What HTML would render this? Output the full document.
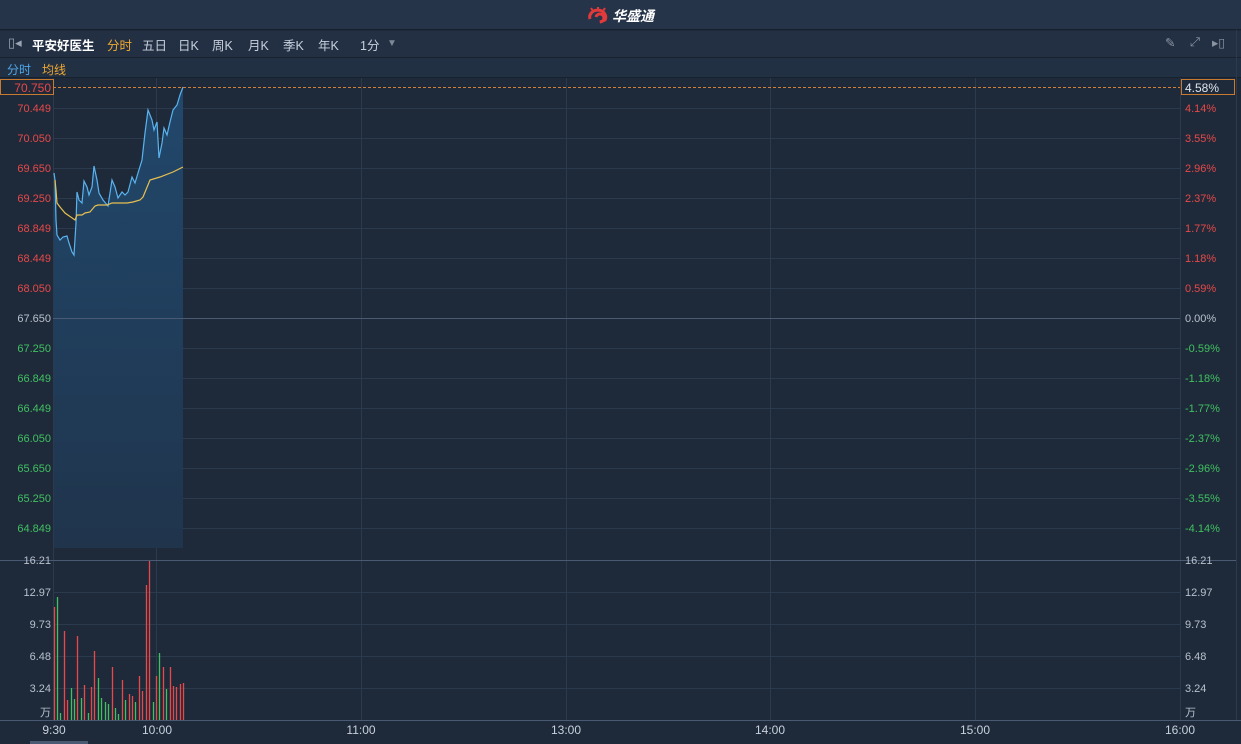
<!DOCTYPE html>
<html><head><meta charset="utf-8"><style>
*{margin:0;padding:0;box-sizing:border-box}
body{width:1241px;height:744px;background:#1e2a3a;font-family:"Liberation Sans","Noto Sans CJK SC",sans-serif;overflow:hidden;position:relative;color:#c8d0dc}
.top{position:absolute;left:0;top:0;width:1241px;height:30px;background:#26344a;border-bottom:1px solid #18212e}
.tb{position:absolute;left:0;top:31px;width:1241px;height:27px;background:#233044;border-bottom:1px solid #18212e;font-size:12.5px}
.tb span{position:absolute;top:4px}
.lg{position:absolute;left:0;top:58px;width:1241px;height:20px;background:#223044;border-bottom:1px solid #18212e;font-size:12px}
svg.c{position:absolute;left:0;top:0}
</style></head><body>
<div class="top"></div>
<div style="position:absolute;left:588px;top:6px;height:20px;display:flex;align-items:center;font-size:14px;font-weight:bold;color:#fff;">
<svg width="22" height="18" viewBox="0 0 22 18"><path d="M2 12 A8 7 0 1 1 17 13 L12 15 A4 4 0 1 0 8 10" fill="none" stroke="#e23a3a" stroke-width="3"/><path d="M5 4 L3 1 M10 2 L10 0 M15 4 L17 1" stroke="#e23a3a" stroke-width="2"/></svg><span style="margin-left:2px;font-style:italic">华盛通</span></div>
<div class="tb">
<span style="left:8px;top:4px;color:#9aa4b2;font-size:13px">▯◂</span>
<span style="left:32px;color:#fff;font-weight:bold">平安好医生</span>
<span style="left:107px;color:#f0a830">分时</span>
<span style="left:142px">五日</span>
<span style="left:178px">日K</span>
<span style="left:212px">周K</span>
<span style="left:248px">月K</span>
<span style="left:283px">季K</span>
<span style="left:318px">年K</span>
<span style="left:360px">1分</span>
<span style="left:387px;color:#7d8898;font-size:10px;top:7px">▼</span>
<span style="left:1165px;color:#8a94a2;top:4px">✎</span>
<span style="left:1190px;color:#8a94a2;top:4px">⤢</span>
<span style="left:1212px;color:#8a94a2;top:4px">▸▯</span>
</div>
<div class="lg"><span style="position:absolute;left:7px;top:3px;color:#4ea8e8">分时</span><span style="position:absolute;left:42px;top:3px;color:#f0a830">均线</span></div>
<svg class="c" width="1241" height="744" font-size="11" font-family="Liberation Sans, sans-serif">
<defs><linearGradient id="g" x1="0" y1="0" x2="0" y2="1"><stop offset="0" stop-color="#21486c"/><stop offset="1" stop-color="#20344c"/></linearGradient></defs>
<g stroke="#2c3a4e" stroke-width="1">
<line x1="53" y1="108.5" x2="1180" y2="108.5"/><line x1="53" y1="138.5" x2="1180" y2="138.5"/><line x1="53" y1="168.5" x2="1180" y2="168.5"/><line x1="53" y1="198.5" x2="1180" y2="198.5"/><line x1="53" y1="228.5" x2="1180" y2="228.5"/><line x1="53" y1="258.5" x2="1180" y2="258.5"/><line x1="53" y1="288.5" x2="1180" y2="288.5"/><line x1="53" y1="348.5" x2="1180" y2="348.5"/><line x1="53" y1="378.5" x2="1180" y2="378.5"/><line x1="53" y1="408.5" x2="1180" y2="408.5"/><line x1="53" y1="438.5" x2="1180" y2="438.5"/><line x1="53" y1="468.5" x2="1180" y2="468.5"/><line x1="53" y1="498.5" x2="1180" y2="498.5"/><line x1="53" y1="528.5" x2="1180" y2="528.5"/>
<line x1="53" y1="592.5" x2="1180" y2="592.5"/><line x1="53" y1="624.5" x2="1180" y2="624.5"/><line x1="53" y1="656.5" x2="1180" y2="656.5"/><line x1="53" y1="688.5" x2="1180" y2="688.5"/>
<line x1="53.5" y1="78" x2="53.5" y2="720"/><line x1="156.5" y1="78" x2="156.5" y2="720"/><line x1="361.5" y1="78" x2="361.5" y2="720"/><line x1="566.5" y1="78" x2="566.5" y2="720"/><line x1="770.5" y1="78" x2="770.5" y2="720"/><line x1="975.5" y1="78" x2="975.5" y2="720"/><line x1="1180.5" y1="78" x2="1180.5" y2="720"/><line x1="1236.5" y1="30" x2="1236.5" y2="720"/>
</g>
<polygon fill="url(#g)" points="54,173 55,180 56,220 57,235 60,240 63,237 67,236 69,243 72,252 74,255 76,223 77,192 79,200 82,203 84,181 87,187 89,195 92,187 94,166 97,180 99,193 103,200 108,206 112,180 115,187 118,198 122,192 125,195 128,192 132,177 135,183 138,173 142,160 145,133 148,110 152,120 154,130 157,122 159,158 162,143 164,128 167,135 170,122 173,110 177,105 180,95 183,87 183,548 54,548"/>
<line x1="53" y1="318.5" x2="1180" y2="318.5" stroke="#4a5a72"/>
<line x1="0" y1="560.5" x2="1236" y2="560.5" stroke="#4a5a72"/>
<line x1="0" y1="720.5" x2="1241" y2="720.5" stroke="#4a5a72"/>
<polyline fill="none" stroke="#5ab4f0" stroke-width="1.2" points="54,173 55,180 56,220 57,235 60,240 63,237 67,236 69,243 72,252 74,255 76,223 77,192 79,200 82,203 84,181 87,187 89,195 92,187 94,166 97,180 99,193 103,200 108,206 112,180 115,187 118,198 122,192 125,195 128,192 132,177 135,183 138,173 142,160 145,133 148,110 152,120 154,130 157,122 159,158 162,143 164,128 167,135 170,122 173,110 177,105 180,95 183,87"/>
<polyline fill="none" stroke="#e8c050" stroke-width="1.2" points="55,180 56,190 57,203 60,207 65,213 75,220 77,215 82,215 85,213 90,212 95,206 98,205 107,205 112,203 127,203 133,202 140,200 143,197 150,180 160,177 173,172 183,167"/>
<line x1="53" y1="87.5" x2="1180" y2="87.5" stroke="#d08038" stroke-dasharray="3,2"/>
<rect x="0.5" y="79.5" width="53" height="15" fill="#1e2a3a" stroke="#c87a30"/>
<rect x="1181.5" y="79.5" width="53" height="15" fill="#1e2a3a" stroke="#c87a30"/>
<g text-anchor="end" fill="#e84848">
<text x="51" y="92" font-size="12">70.750</text><text x="51" y="112">70.449</text><text x="51" y="142">70.050</text><text x="51" y="172">69.650</text><text x="51" y="202">69.250</text><text x="51" y="232">68.849</text><text x="51" y="262">68.449</text><text x="51" y="292">68.050</text>
<text x="51" y="322" fill="#b8c0cc">67.650</text>
<g fill="#40c060"><text x="51" y="352">67.250</text><text x="51" y="382">66.849</text><text x="51" y="412">66.449</text><text x="51" y="442">66.050</text><text x="51" y="472">65.650</text><text x="51" y="502">65.250</text><text x="51" y="532">64.849</text></g>
<g fill="#b8c0cc"><text x="51" y="564">16.21</text><text x="51" y="596">12.97</text><text x="51" y="628">9.73</text><text x="51" y="660">6.48</text><text x="51" y="692">3.24</text><text x="51" y="716">万</text></g>
</g>
<g fill="#e84848">
<text x="1185" y="92" font-size="12" fill="#e0e6ee">4.58%</text><text x="1185" y="112">4.14%</text><text x="1185" y="142">3.55%</text><text x="1185" y="172">2.96%</text><text x="1185" y="202">2.37%</text><text x="1185" y="232">1.77%</text><text x="1185" y="262">1.18%</text><text x="1185" y="292">0.59%</text>
<text x="1185" y="322" fill="#b8c0cc">0.00%</text>
<g fill="#40c060"><text x="1185" y="352">-0.59%</text><text x="1185" y="382">-1.18%</text><text x="1185" y="412">-1.77%</text><text x="1185" y="442">-2.37%</text><text x="1185" y="472">-2.96%</text><text x="1185" y="502">-3.55%</text><text x="1185" y="532">-4.14%</text></g>
<g fill="#b8c0cc"><text x="1185" y="564">16.21</text><text x="1185" y="596">12.97</text><text x="1185" y="628">9.73</text><text x="1185" y="660">6.48</text><text x="1185" y="692">3.24</text><text x="1185" y="716">万</text></g>
</g>
<g stroke-width="1.3">
<g stroke="#e84848"><line x1="54.5" y1="607" x2="54.5" y2="720"/><line x1="64.5" y1="631" x2="64.5" y2="720"/><line x1="67.5" y1="700" x2="67.5" y2="720"/><line x1="77.5" y1="636" x2="77.5" y2="720"/><line x1="84.5" y1="685" x2="84.5" y2="720"/><line x1="91.5" y1="687" x2="91.5" y2="720"/><line x1="94.5" y1="651" x2="94.5" y2="720"/><line x1="112.5" y1="667" x2="112.5" y2="720"/><line x1="122.5" y1="680" x2="122.5" y2="720"/><line x1="129.5" y1="694" x2="129.5" y2="720"/><line x1="132.5" y1="696" x2="132.5" y2="720"/><line x1="139.5" y1="676" x2="139.5" y2="720"/><line x1="142.5" y1="691" x2="142.5" y2="720"/><line x1="146.5" y1="585" x2="146.5" y2="720"/><line x1="149.5" y1="561" x2="149.5" y2="720"/><line x1="156.5" y1="676" x2="156.5" y2="720"/><line x1="163.5" y1="667" x2="163.5" y2="720"/><line x1="170.5" y1="667" x2="170.5" y2="720"/><line x1="173.5" y1="686" x2="173.5" y2="720"/><line x1="176.5" y1="687" x2="176.5" y2="720"/><line x1="180.5" y1="684" x2="180.5" y2="720"/><line x1="183.5" y1="683" x2="183.5" y2="720"/></g>
<g stroke="#40c060"><line x1="57.5" y1="597" x2="57.5" y2="720"/><line x1="60.5" y1="713" x2="60.5" y2="720"/><line x1="71.5" y1="688" x2="71.5" y2="720"/><line x1="74.5" y1="699" x2="74.5" y2="720"/><line x1="81.5" y1="698" x2="81.5" y2="720"/><line x1="88.5" y1="713" x2="88.5" y2="720"/><line x1="98.5" y1="678" x2="98.5" y2="720"/><line x1="101.5" y1="698" x2="101.5" y2="720"/><line x1="105.5" y1="702" x2="105.5" y2="720"/><line x1="108.5" y1="704" x2="108.5" y2="720"/><line x1="115.5" y1="708" x2="115.5" y2="720"/><line x1="118.5" y1="714" x2="118.5" y2="720"/><line x1="125.5" y1="700" x2="125.5" y2="720"/><line x1="135.5" y1="702" x2="135.5" y2="720"/><line x1="153.5" y1="702" x2="153.5" y2="720"/><line x1="159.5" y1="653" x2="159.5" y2="720"/><line x1="166.5" y1="689" x2="166.5" y2="720"/></g>
</g>
<g fill="#c8d0dc" font-size="12" text-anchor="middle"><text x="54" y="734">9:30</text><text x="157" y="734">10:00</text><text x="361" y="734">11:00</text><text x="566" y="734">13:00</text><text x="770" y="734">14:00</text><text x="975" y="734">15:00</text><text x="1180" y="734">16:00</text></g>
<rect x="30" y="741" width="58" height="3" fill="#4a5a72"/>
</svg>
</body></html>
